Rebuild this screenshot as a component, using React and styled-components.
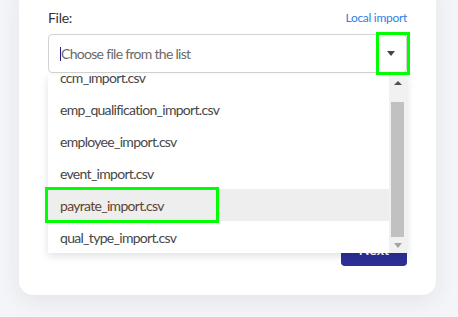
import styled, { createGlobalStyle } from 'styled-components'

const GlobalStyle = createGlobalStyle`
  html, body {
    margin: 0;
    padding: 0;
    background: #f4f5f8;
    font-family: Lato, "Noto Sans", sans-serif;
    overflow: hidden;
  }
`

const Page = styled.div`
  position: relative;
  display: flow-root;
  width: 458px;
  height: 317px;
  padding-left: 19px;
  box-sizing: border-box;
`

const Card = styled.div`
  width: 417px;
  margin-top: -16px;
  padding: 23px 29px 29px;
  box-sizing: border-box;
  background: #fff;
  border-radius: 14px;
  box-shadow: 0 6px 22px rgba(30, 40, 80, 0.08);
  display: flex;
  flex-direction: column;
`

const HeaderRow = styled.div`
  height: 20px;
  display: flex;
  align-items: center;
  justify-content: space-between;
`

const Label = styled.span`
  font-size: 14px;
  letter-spacing: -0.3px;
  color: #333;
`

const LinkText = styled.span`
  font-size: 12px;
  letter-spacing: -0.3px;
  color: #2f7fe8;
`

const SelectWrap = styled.div`
  position: relative;
  margin-top: 7px;
`

const SelectBox = styled.div`
  height: 39px;
  box-sizing: border-box;
  border: 1px solid #d2d2d2;
  border-radius: 4px;
  display: flex;
  align-items: center;
  padding: 0 10px 0 11px;
`

const Caret = styled.span`
  width: 1px;
  height: 14px;
  background: #1c1f8a;
`

const Placeholder = styled.span`
  flex: 1;
  font-size: 14px;
  letter-spacing: -0.7px;
  color: #6b6b6b;
`

const Arrow = styled.span`
  width: 0;
  height: 0;
  border-left: 4px solid transparent;
  border-right: 4px solid transparent;
  border-top: 5px solid ${p => p.$color || '#444'};
  margin-right: ${p => p.$mr || 0}px;
`

const UpArrow = styled.span`
  width: 0;
  height: 0;
  border-left: 4px solid transparent;
  border-right: 4px solid transparent;
  border-bottom: 4px solid ${p => p.$color || '#505050'};
`

const Dropdown = styled.div`
  position: absolute;
  top: calc(100% + 2px);
  left: 0;
  right: 0;
  height: 178px;
  background: #fff;
  display: flex;
  box-shadow: 0 3px 8px rgba(0, 0, 0, 0.12);
  z-index: 2;
`

const Options = styled.div`
  flex: 1;
  overflow: hidden;
`

const OptionList = styled.div`
  margin-top: -14px;
`

const Option = styled.div`
  height: 32px;
  display: flex;
  align-items: center;
  padding-left: 12px;
  font-size: 14px;
  letter-spacing: -0.7px;
  color: ${p => (p.$active ? '#5e4532' : '#474747')};
  background: ${p => (p.$active ? '#eeeeee' : '#fff')};
`

const Scrollbar = styled.div`
  width: 18px;
  background: #f1f1f1;
  display: flex;
  flex-direction: column;
`

const ScrollButton = styled.div`
  height: ${p => p.$h}px;
  display: flex;
  align-items: center;
  justify-content: center;
  padding-right: 1px;
`

const Track = styled.div`
  flex: 1;
  display: flex;
  flex-direction: column;
  padding: 12px 3px 0 2px;
`

const Thumb = styled.div`
  flex: 1;
  background: #c1c1c1;
`

const Field = styled.div`
  height: 34px;
  margin-top: ${p => p.$mt}px;
  box-sizing: border-box;
  border: 1px solid #d3ddf6;
  border-radius: 4px;
`

const Footer = styled.div`
  display: flex;
  justify-content: flex-end;
  margin-top: 25px;
`

const Button = styled.button`
  width: 66px;
  height: 33px;
  border: none;
  border-radius: 4px;
  background: #2c2f95;
  color: #fff;
  font-family: Lato, sans-serif;
  font-size: 14px;
  font-weight: 700;
`

const Highlight = styled.div`
  position: absolute;
  left: ${p => p.$x}px;
  top: ${p => p.$y}px;
  width: ${p => p.$w}px;
  height: ${p => p.$h}px;
  box-sizing: border-box;
  border: 3px solid #00ff00;
  z-index: 5;
`

const files = [
  'ccm_import.csv',
  'emp_qualification_import.csv',
  'employee_import.csv',
  'event_import.csv',
  'payrate_import.csv',
  'qual_type_import.csv',
]

export default function App() {
  return (
    <Page>
      <GlobalStyle />
      <Card>
        <HeaderRow>
          <Label>File:</Label>
          <LinkText>Local import</LinkText>
        </HeaderRow>
        <SelectWrap>
          <SelectBox>
            <Caret />
            <Placeholder>Choose file from the list</Placeholder>
            <Arrow $mr={1} />
          </SelectBox>
          <Dropdown>
            <Options>
              <OptionList>
                {files.map(f => (
                  <Option key={f} $active={f === 'payrate_import.csv'}>{f}</Option>
                ))}
              </OptionList>
            </Options>
            <Scrollbar>
              <ScrollButton $h={15}><UpArrow /></ScrollButton>
              <Track><Thumb /></Track>
              <ScrollButton $h={16}><Arrow $color="#a3a3a3" /></ScrollButton>
            </Scrollbar>
          </Dropdown>
        </SelectWrap>
        <Field $mt={33} />
        <Field $mt={34} />
        <Footer>
          <Button>Next</Button>
        </Footer>
      </Card>
      <Highlight $x={376} $y={32} $w={34} $h={43} />
      <Highlight $x={45} $y={187} $w={174} $h={36} />
    </Page>
  )
}
